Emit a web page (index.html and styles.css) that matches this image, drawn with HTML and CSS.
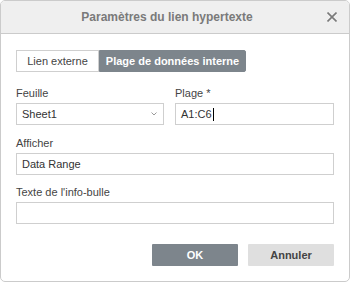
FILE: index.html
```html
<!DOCTYPE html>
<html lang="fr">
<head>
    <meta charset="UTF-8">
    <meta name="viewport" content="width=device-width, initial-scale=1.0">
    <title>Paramètres du lien hypertexte</title>
    <link rel="stylesheet" href="styles.css">
</head>
<body>
    <div class="dialog">
        <div class="header">
            <span class="title">Paramètres du lien hypertexte</span>
            <svg class="close" width="10" height="10" viewBox="0 0 10 10">
                <path d="M0.5 0.5 L9.5 9.5 M9.5 0.5 L0.5 9.5" stroke="#7a7a7a" stroke-width="1.6" fill="none"/>
            </svg>
        </div>
        <div class="body">
            <div class="tabs">
                <div class="tab">Lien externe</div>
                <div class="tab active">Plage de données interne</div>
            </div>

            <div class="row">
                <div class="group">
                    <div class="label">Feuille</div>
                    <div class="field select">
                        <span>Sheet1</span>
                        <svg class="arrow" width="6" height="4" viewBox="0 0 6 4">
                            <path d="M0.5 0.5 L3 3 L5.5 0.5" stroke="#9a9a9a" stroke-width="1" fill="none"/>
                        </svg>
                    </div>
                </div>
                <div class="group">
                    <div class="label">Plage *</div>
                    <div class="field"><span>A1:C6</span><span class="caret"></span></div>
                </div>
            </div>

            <div class="group spaced">
                <div class="label">Afficher</div>
                <div class="field">Data Range</div>
            </div>

            <div class="group spaced">
                <div class="label">Texte de l'info-bulle</div>
                <div class="field"></div>
            </div>

            <div class="footer">
                <button class="btn primary">OK</button>
                <button class="btn">Annuler</button>
            </div>
        </div>
    </div>
</body>
</html>
```

FILE: styles.css
```css
body {
    margin: 0;
    font-family: 'Liberation Sans', Arial, sans-serif;
    font-size: 11px;
    color: #444;
    background: #fff;
}
.dialog {
    box-sizing: border-box;
    width: 350px;
    height: 282px;
    border: 1px solid #cbcbcb;
    border-radius: 5px;
    overflow: hidden;
}
.header {
    position: relative;
    height: 32px;
    background: #efefef;
    border-bottom: 1px solid #cbcbcb;
    display: flex;
    align-items: center;
    justify-content: center;
    padding-right: 16px;
}
.title {
    font-size: 12px;
    font-weight: bold;
    color: #7a7a7a;
}
.close {
    position: absolute;
    right: 12px;
    top: 11px;
}
.body {
    padding: 16px 15px 0 15px;
}
.tabs {
    display: flex;
    height: 22px;
}
.tab {
    box-sizing: border-box;
    height: 22px;
    line-height: 20px;
    border: 1px solid #cfcfcf;
    width: 83px;
    text-align: center;
    white-space: nowrap;
    color: #444;
}
.tab.active {
    width: 147px;
    background: #7d858c;
    border-color: #7d858c;
    color: #fff;
    font-weight: bold;
    border-radius: 0 2px 2px 0;
}
.row {
    display: grid;
    grid-template-columns: 148px 1fr;
    column-gap: 11px;
    margin-top: 14px;
}
.label {
    line-height: 14px;
    margin-bottom: 3px;
    color: #444;
}
.spaced {
    margin-top: 11px;
}
.spaced + .spaced {
    margin-top: 10px;
}
.field {
    box-sizing: border-box;
    height: 22px;
    border: 1px solid #cfcfcf;
    padding: 0 5px;
    line-height: 20px;
    display: flex;
    align-items: center;
    color: #333;
}
.select {
    justify-content: space-between;
}
.arrow {
    margin-right: 1px;
}
.caret {
    display: inline-block;
    width: 1px;
    height: 13px;
    background: #000;
    margin-left: 1px;
}
.footer {
    display: flex;
    justify-content: flex-end;
    gap: 10px;
    margin-top: 20px;
}
.btn {
    width: 86px;
    height: 22px;
    border: none;
    border-radius: 1px;
    background: #dfdfdf;
    color: #444;
    font-family: 'Liberation Sans', Arial, sans-serif;
    font-size: 11px;
    font-weight: bold;
    padding: 0;
}
.btn.primary {
    background: #7d858c;
    color: #fff;
}
```
